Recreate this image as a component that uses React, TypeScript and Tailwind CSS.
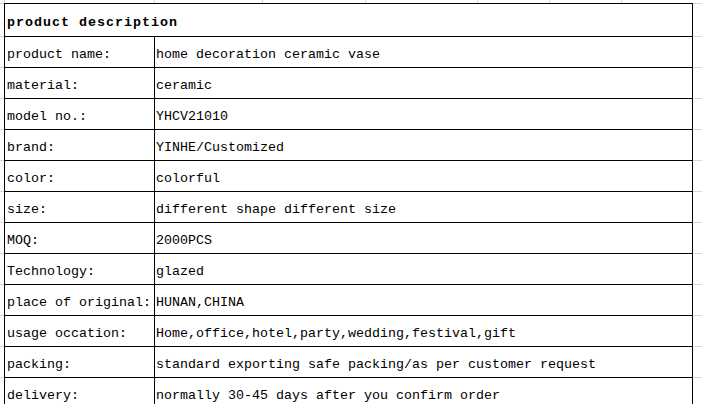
import React from "react";

const rows: [string, string][] = [
  ["product name:", "home decoration ceramic vase"],
  ["material:", "ceramic"],
  ["model no.:", "YHCV21010"],
  ["brand:", "YINHE/Customized"],
  ["color:", "colorful"],
  ["size:", "different shape different size"],
  ["MOQ:", "2000PCS"],
  ["Technology:", "glazed"],
  ["place of original:", "HUNAN,CHINA"],
  ["usage occation:", "Home,office,hotel,party,wedding,festival,gift"],
  ["packing:", "standard exporting safe packing/as per customer request"],
  ["delivery:", "normally 30-45 days after you confirm order"],
];

export default function App() {
  return (
    <div
      className="w-[702px] h-[404px] overflow-hidden bg-white text-black text-[13.333px] whitespace-nowrap"
      style={{ fontFamily: '"Liberation Mono", "Courier New", monospace' }}
    >
      {/* top strip of sheet gridlines */}
      <div className="flex h-[3px]">
        <div className="w-[4px]" />
        <div className="w-[150px] border-l border-[#d0d7e5]" />
        <div className="w-[108px] border-l border-[#d0d7e5]" />
        <div className="w-[103px] border-l border-[#d0d7e5]" />
        <div className="w-[112px] border-l border-[#d0d7e5]" />
        <div className="w-[72px] border-l border-[#d0d7e5]" />
        <div className="w-[72px] border-l border-[#d0d7e5]" />
        <div className="w-[81px] border-l border-[#d0d7e5]" />
      </div>

      {/* header row */}
      <div className="flex h-[34px]">
        <div className="w-[4px] border-t border-b border-[#d0d7e5]" />
        <div className="w-[689px] border border-black pl-[2px] pt-[10px] leading-[17px] font-bold tracking-[1px]">
          product description
        </div>
        <div className="w-[9px] border-t border-b border-[#d0d7e5]" />
      </div>

      {rows.map(([k, v]) => (
        <div key={k} className="flex h-[31px] shrink-0">
          <div className="w-[4px] border-b border-[#d0d7e5]" />
          <div className="w-[151px] border-l border-r border-b border-black pl-[2px] pt-[9px] leading-[17px]">
            {k}
          </div>
          <div className="w-[538px] border-r border-b border-black pl-[1px] pt-[9px] leading-[17px]">
            {v}
          </div>
          <div className="w-[9px] border-b border-[#d0d7e5]" />
        </div>
      ))}
    </div>
  );
}
